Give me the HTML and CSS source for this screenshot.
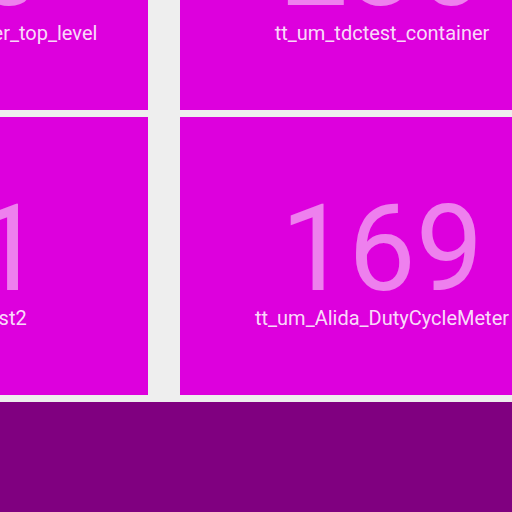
FILE: index.html
```html
<!DOCTYPE html>
<html>
<head>
<meta charset="utf-8">
<link rel="stylesheet" href="styles.css">
</head>
<body>
<div class="page">
  <div class="grid">
    <div class="tile">
      <div class="count">160</div>
      <div class="name">tt_um_mywokwi_wrapper_top_level</div>
    </div>
    <div class="tile">
      <div class="count">236</div>
      <div class="name">tt_um_tdctest_container</div>
    </div>
    <div class="tile">
      <div class="count">201</div>
      <div class="name">tt_um_sampletest2</div>
    </div>
    <div class="tile">
      <div class="count">169</div>
      <div class="name">tt_um_Alida_DutyCycleMeter</div>
    </div>
  </div>
  <div class="footer"></div>
</div>
</body>
</html>
```
FILE: styles.css
```css
html, body {
  margin: 0;
  padding: 0;
  width: 512px;
  height: 512px;
  overflow: hidden;
  background: #eeeeee;
  font-family: Roboto, "Liberation Sans", sans-serif;
}

.page {
  margin-top: -168px;
}

.grid {
  display: grid;
  grid-template-columns: 413px 404px;
  grid-auto-rows: 278px;
  column-gap: 32px;
  row-gap: 7px;
  margin-left: -265px;
}

.tile {
  background: #dd00dd;
  box-sizing: border-box;
  padding-top: 84px;
  display: flex;
  flex-direction: column;
  align-items: center;
  white-space: nowrap;
}

.count {
  font-size: 120px;
  line-height: 96px;
  color: rgba(255, 255, 255, 0.5);
}

.name {
  margin-top: 9px;
  font-size: 20px;
  line-height: 24px;
  color: rgba(255, 255, 255, 0.87);
}

.footer {
  margin-top: 7px;
  height: 200px;
  background: #800080;
}
```
